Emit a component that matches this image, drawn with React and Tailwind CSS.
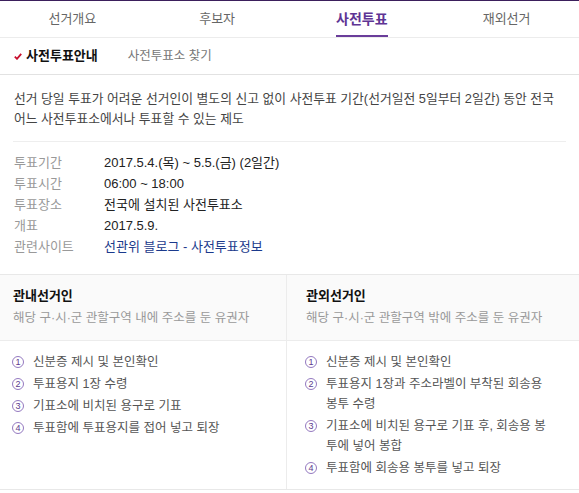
import React from 'react';

const tabs = ['선거개요', '후보자', '사전투표', '재외선거'];

const info = [
  { label: '투표기간', value: '2017.5.4.(목) ~ 5.5.(금) (2일간)' },
  { label: '투표시간', value: '06:00 ~ 18:00' },
  { label: '투표장소', value: '전국에 설치된 사전투표소' },
  { label: '개표', value: '2017.5.9.' },
  { label: '관련사이트', value: '선관위 블로그 - 사전투표정보', link: true }
];

const groups = [
  {
    title: '관내선거인',
    desc: '해당 구·시·군 관할구역 내에 주소를 둔 유권자',
    steps: ['신분증 제시 및 본인확인', '투표용지 1장 수령', '기표소에 비치된 용구로 기표', '투표함에 투표용지를 접어 넣고 퇴장']
  },
  {
    title: '관외선거인',
    desc: '해당 구·시·군 관할구역 밖에 주소를 둔 유권자',
    steps: [
      '신분증 제시 및 본인확인',
      '투표용지 1장과 주소라벨이 부착된 회송용 봉투 수령',
      '기표소에 비치된 용구로 기표 후, 회송용 봉투에 넣어 봉합',
      '투표함에 회송용 봉투를 넣고 퇴장'
    ]
  }
];

const nums = ['1', '2', '3', '4'];

function StepNum({ n }) {
  return (
    <span className="w-[21px] shrink-0 pt-[4px]">
      <span className="flex h-[12px] w-[12px] items-center justify-center rounded-full border border-[#9479c0] text-[9px] leading-none text-[#5b3a8e]">
        {n}
      </span>
    </span>
  );
}

export default function App() {
  return (
    <div className="h-[493px] w-[579px] overflow-hidden bg-white text-[12.5px] text-[#444]" style={{ fontFamily: '"Liberation Sans", "Noto Sans CJK KR", sans-serif' }}>
      <div className="h-px bg-[#3b1f5c]" />

      {/* Tabs */}
      <div className="grid h-[37px] grid-cols-4 border-b border-[#ececec]">
        {tabs.map((t) => (
          <div key={t} className="flex h-full justify-center">
            {t === '사전투표' ? (
              <span className="flex h-full items-center border-b-2 border-[#6a3d9a] pt-[2px] text-[14px] font-bold text-[#5e3494]">{t}</span>
            ) : (
              <span className="flex h-full items-center text-[13px] text-[#666]">{t}</span>
            )}
          </div>
        ))}
      </div>

      {/* Sub tabs */}
      <div className="flex h-[37px] items-center border-b border-[#e2e2e2] pl-[14px]">
        <svg width="8" height="7" viewBox="0 0 8 7" className="mr-[4px]">
          <path d="M0.8 3.6 L3 5.8 L7.2 0.8" stroke="#c8102e" strokeWidth="1.8" fill="none" />
        </svg>
        <span className="text-[13px] font-bold text-[#111]">사전투표안내</span>
        <span className="ml-[30px] text-[#777]">사전투표소 찾기</span>
      </div>

      {/* Intro */}
      <div className="px-[13px]">
        <p className="border-b border-[#eeeeee] pt-[14px] pr-[2px] pb-[12px] pl-px text-[12.8px] leading-[20px] text-[#444]">
          선거 당일 투표가 어려운 선거인이 별도의 신고 없이 사전투표 기간(선거일전 5일부터 2일간) 동안 전국 어느 사전투표소에서나 투표할 수 있는 제도
        </p>
      </div>

      {/* Info table */}
      <div className="px-[14px] pt-[10px] pb-[17px] text-[13px]">
        {info.map((row) => (
          <div key={row.label} className="flex h-[21px] items-center">
            <span className="w-[90px] text-[#999]">{row.label}</span>
            <span className={row.link ? 'text-[#1b3a8c]' : 'text-[#222]'}>{row.value}</span>
          </div>
        ))}
      </div>

      {/* Groups */}
      <div className="border-y border-[#e8e8e8]">
        <div className="flex border-b border-[#ececec] bg-[#fafafa]">
          {groups.map((g, i) => (
            <div key={g.title} className={i === 0 ? 'w-[287px] border-r border-[#ececec] pt-[11px] pb-[12px] pl-[13px]' : 'flex-1 pt-[11px] pb-[12px] pl-[19px]'}>
              <div className="text-[13px] leading-[20px] font-bold text-[#111]">{g.title}</div>
              <div className="mt-[2px] leading-[20px] text-[#999]">{g.desc}</div>
            </div>
          ))}
        </div>
        <div className="flex h-[148px]">
          {groups.map((g, i) => (
            <ul key={g.title} className={i === 0 ? 'w-[287px] border-r border-[#ececec] pt-[11px] pl-[12px]' : 'flex-1 pt-[11px] pr-[24px] pl-[18px]'}>
              {g.steps.map((s, j) => (
                <li key={s} className="mb-[2px] flex leading-[20px] text-[#555]">
                  <StepNum n={nums[j]} />
                  <span>{s}</span>
                </li>
              ))}
            </ul>
          ))}
        </div>
      </div>
    </div>
  );
}
